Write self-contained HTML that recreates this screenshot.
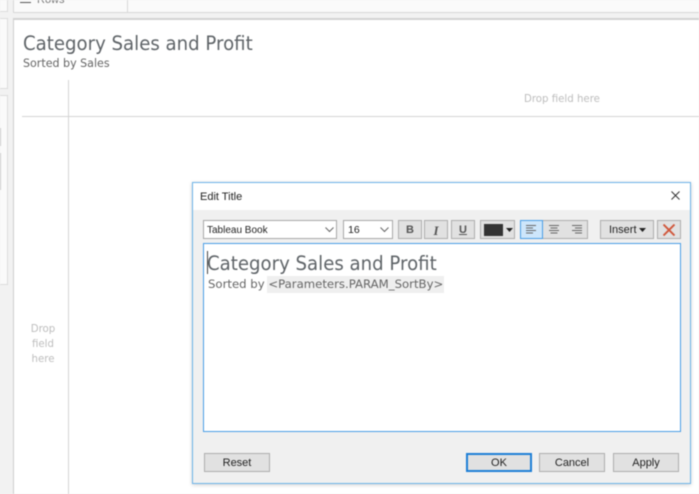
<!DOCTYPE html>
<html><head><meta charset="utf-8"><style>
html,body{margin:0;padding:0;background:#f2f2f2}
#p{position:relative;width:699px;height:494px;overflow:hidden;background:#f2f2f2;font-family:"DejaVu Sans","Liberation Sans",sans-serif;filter:blur(.45px)}
#p div{position:absolute;box-sizing:border-box;white-space:nowrap}
.t{line-height:1}
.b{background:#e1e1e1;border:1px solid #adadad;text-align:center;font-family:"Liberation Sans",sans-serif;font-size:11px;color:#222;line-height:19px}
svg{position:absolute}
</style></head><body><div id="p">
<div style="left:0;top:-2px;width:8px;height:14px;background:#fafafa;border:1px solid #dcdcdc;border-left:0"></div>
<div style="left:13px;top:-2px;width:687px;height:15px;background:#fafafa;border:1px solid #d8d8d8"></div>
<div style="left:127px;top:0;width:1px;height:12px;background:#d8d8d8"></div>
<div style="left:20px;top:2px;width:11px;height:1px;background:#555"></div>
<div style="left:37px;top:-6px;font:11px 'Liberation Sans',sans-serif;color:#777;line-height:12px">Rows</div>
<div style="left:0;top:18px;width:8px;height:71px;background:#fafafa;border:1px solid #dcdcdc;border-left:0"></div>
<div style="left:0;top:95px;width:8px;height:190px;background:#fafafa;border:1px solid #dcdcdc;border-left:0"></div>
<div style="left:0;top:128px;width:1px;height:18px;background:#ccc"></div>
<div style="left:0;top:153px;width:1px;height:37px;background:#ccc"></div>
<div style="left:13px;top:18px;width:690px;height:480px;background:#fff;border:1px solid #cfcfcf;border-top:2px solid #d2d2d2"></div>
<div class="t" style="left:23px;top:32px;font-size:19.3px;color:#5f6468;line-height:23px;transform:scaleX(.94);transform-origin:0 0">Category Sales and Profit</div>
<div class="t" style="left:23px;top:56px;font-size:11.6px;color:#666;line-height:15px;transform:scaleX(.955);transform-origin:0 0">Sorted by Sales</div>
<div style="left:68px;top:80px;width:1px;height:414px;background:#d4d4d4"></div>
<div style="left:22px;top:116px;width:677px;height:1px;background:#d4d4d4"></div>
<div class="t" style="left:524px;top:93px;font-size:10.2px;color:#bdbdbd;line-height:13px">Drop field here</div>
<div class="t" style="left:23px;top:322px;width:40px;text-align:center;font-size:10.200px;color:#bdbdbd;line-height:15px;white-space:normal">Drop<br>field<br>here</div>

<div style="left:192px;top:182px;width:499px;height:302px;background:#f0f0f0;border:1px solid #6db3e8;box-shadow:0 1px 4px rgba(0,0,0,.18)"></div>
<div style="left:193px;top:183px;width:497px;height:27px;background:#fff"></div>
<div style="left:200px;top:190px;font:11px/14px 'Liberation Sans',sans-serif;color:#222">Edit Title</div>
<svg style="left:671px;top:191px" width="9" height="9"><path d="M.5.5l8 8M8.5.5l-8 8" stroke="#333" fill="none"/></svg>

<div style="left:203px;top:220px;width:134px;height:19px;background:#fff;border:1px solid #a8a8a8;font:10px/20px 'Liberation Sans',sans-serif;color:#222;padding-left:3px">Tableau Book</div>
<svg style="left:325px;top:227px" width="9" height="6"><path d="M.5.5l4 4 4-4" stroke="#666" fill="none"/></svg>
<div style="left:343px;top:220px;width:50px;height:19px;background:#fff;border:1px solid #a8a8a8;font:10.500px/19px 'Liberation Sans',sans-serif;color:#222;padding-left:4px">16</div>
<svg style="left:380px;top:227px" width="9" height="6"><path d="M.5.5l4 4 4-4" stroke="#666" fill="none"/></svg>

<div class="b" style="left:398px;top:220px;width:24px;height:19px;font-weight:bold;color:#555">B</div>
<div class="b" style="left:424px;top:220px;width:24px;height:19px;font-weight:bold;font-style:italic;color:#555;font-family:'Liberation Serif',serif;font-size:13px">I</div>
<div class="b" style="left:451px;top:220px;width:24px;height:19px;font-weight:bold;text-decoration:underline;color:#555">U</div>
<div class="b" style="left:480px;top:220px;width:35px;height:19px"></div>
<div style="left:484px;top:224px;width:19px;height:12px;background:#333"></div>
<svg style="left:506px;top:228px" width="7" height="4"><path d="M0 0h7L3.500 4z" fill="#222"/></svg>

<div class="b" style="left:520px;top:220px;width:68px;height:19px"></div>
<div style="left:520px;top:220px;width:23px;height:19px;background:#cde6fb;border:1px solid #4a9ee6"></div>
<svg style="left:526px;top:225px" width="56" height="10" stroke="#666" fill="none"><path d="M0 .5h10M0 3h7M0 5.500h10M0 8h7"/><path d="M23 .5h10M24.500 3h7M23 5.500h10M24.500 8h7"/><path d="M46 .5h10M49 3h7M46 5.500h10M49 8h7"/></svg>

<div class="b" style="left:600px;top:220px;width:54px;height:19px;text-align:left;padding-left:8px">Insert</div>
<svg style="left:639px;top:228px" width="7" height="4"><path d="M0 0h7L3.500 4z" fill="#222"/></svg>
<div class="b" style="left:657px;top:220px;width:24px;height:19px"></div>
<svg style="left:663px;top:224px" width="12" height="12"><path d="M.5.500l11 11M11.500.500l-11 11" stroke="#d0573c" stroke-width="1.900" fill="none"/></svg>

<div style="left:203px;top:243px;width:478px;height:189px;background:#fff;border:1px solid #4a9ee6"></div>
<div style="left:207px;top:251px;width:1px;height:23px;background:#444"></div>
<div class="t" style="left:207px;top:252px;font-size:19.300px;color:#5f6468;line-height:23px;transform:scaleX(.94);transform-origin:0 0">Category Sales and Profit</div>
<div style="left:267px;top:276px;width:177px;height:17px;background:#efefef"></div>
<div class="t" style="left:208px;top:277px;font-size:11.700px;color:#666;line-height:15px">Sorted by &lt;Parameters.PARAM_SortBy&gt;</div>

<div class="b" style="left:204px;top:453px;width:66px;height:19px">Reset</div>
<div class="b" style="left:466px;top:453px;width:66px;height:19px;border:2px solid #1e7fd6;line-height:17px">OK</div>
<div class="b" style="left:539px;top:453px;width:66px;height:19px">Cancel</div>
<div class="b" style="left:613px;top:453px;width:66px;height:19px">Apply</div>
</div></body></html>
